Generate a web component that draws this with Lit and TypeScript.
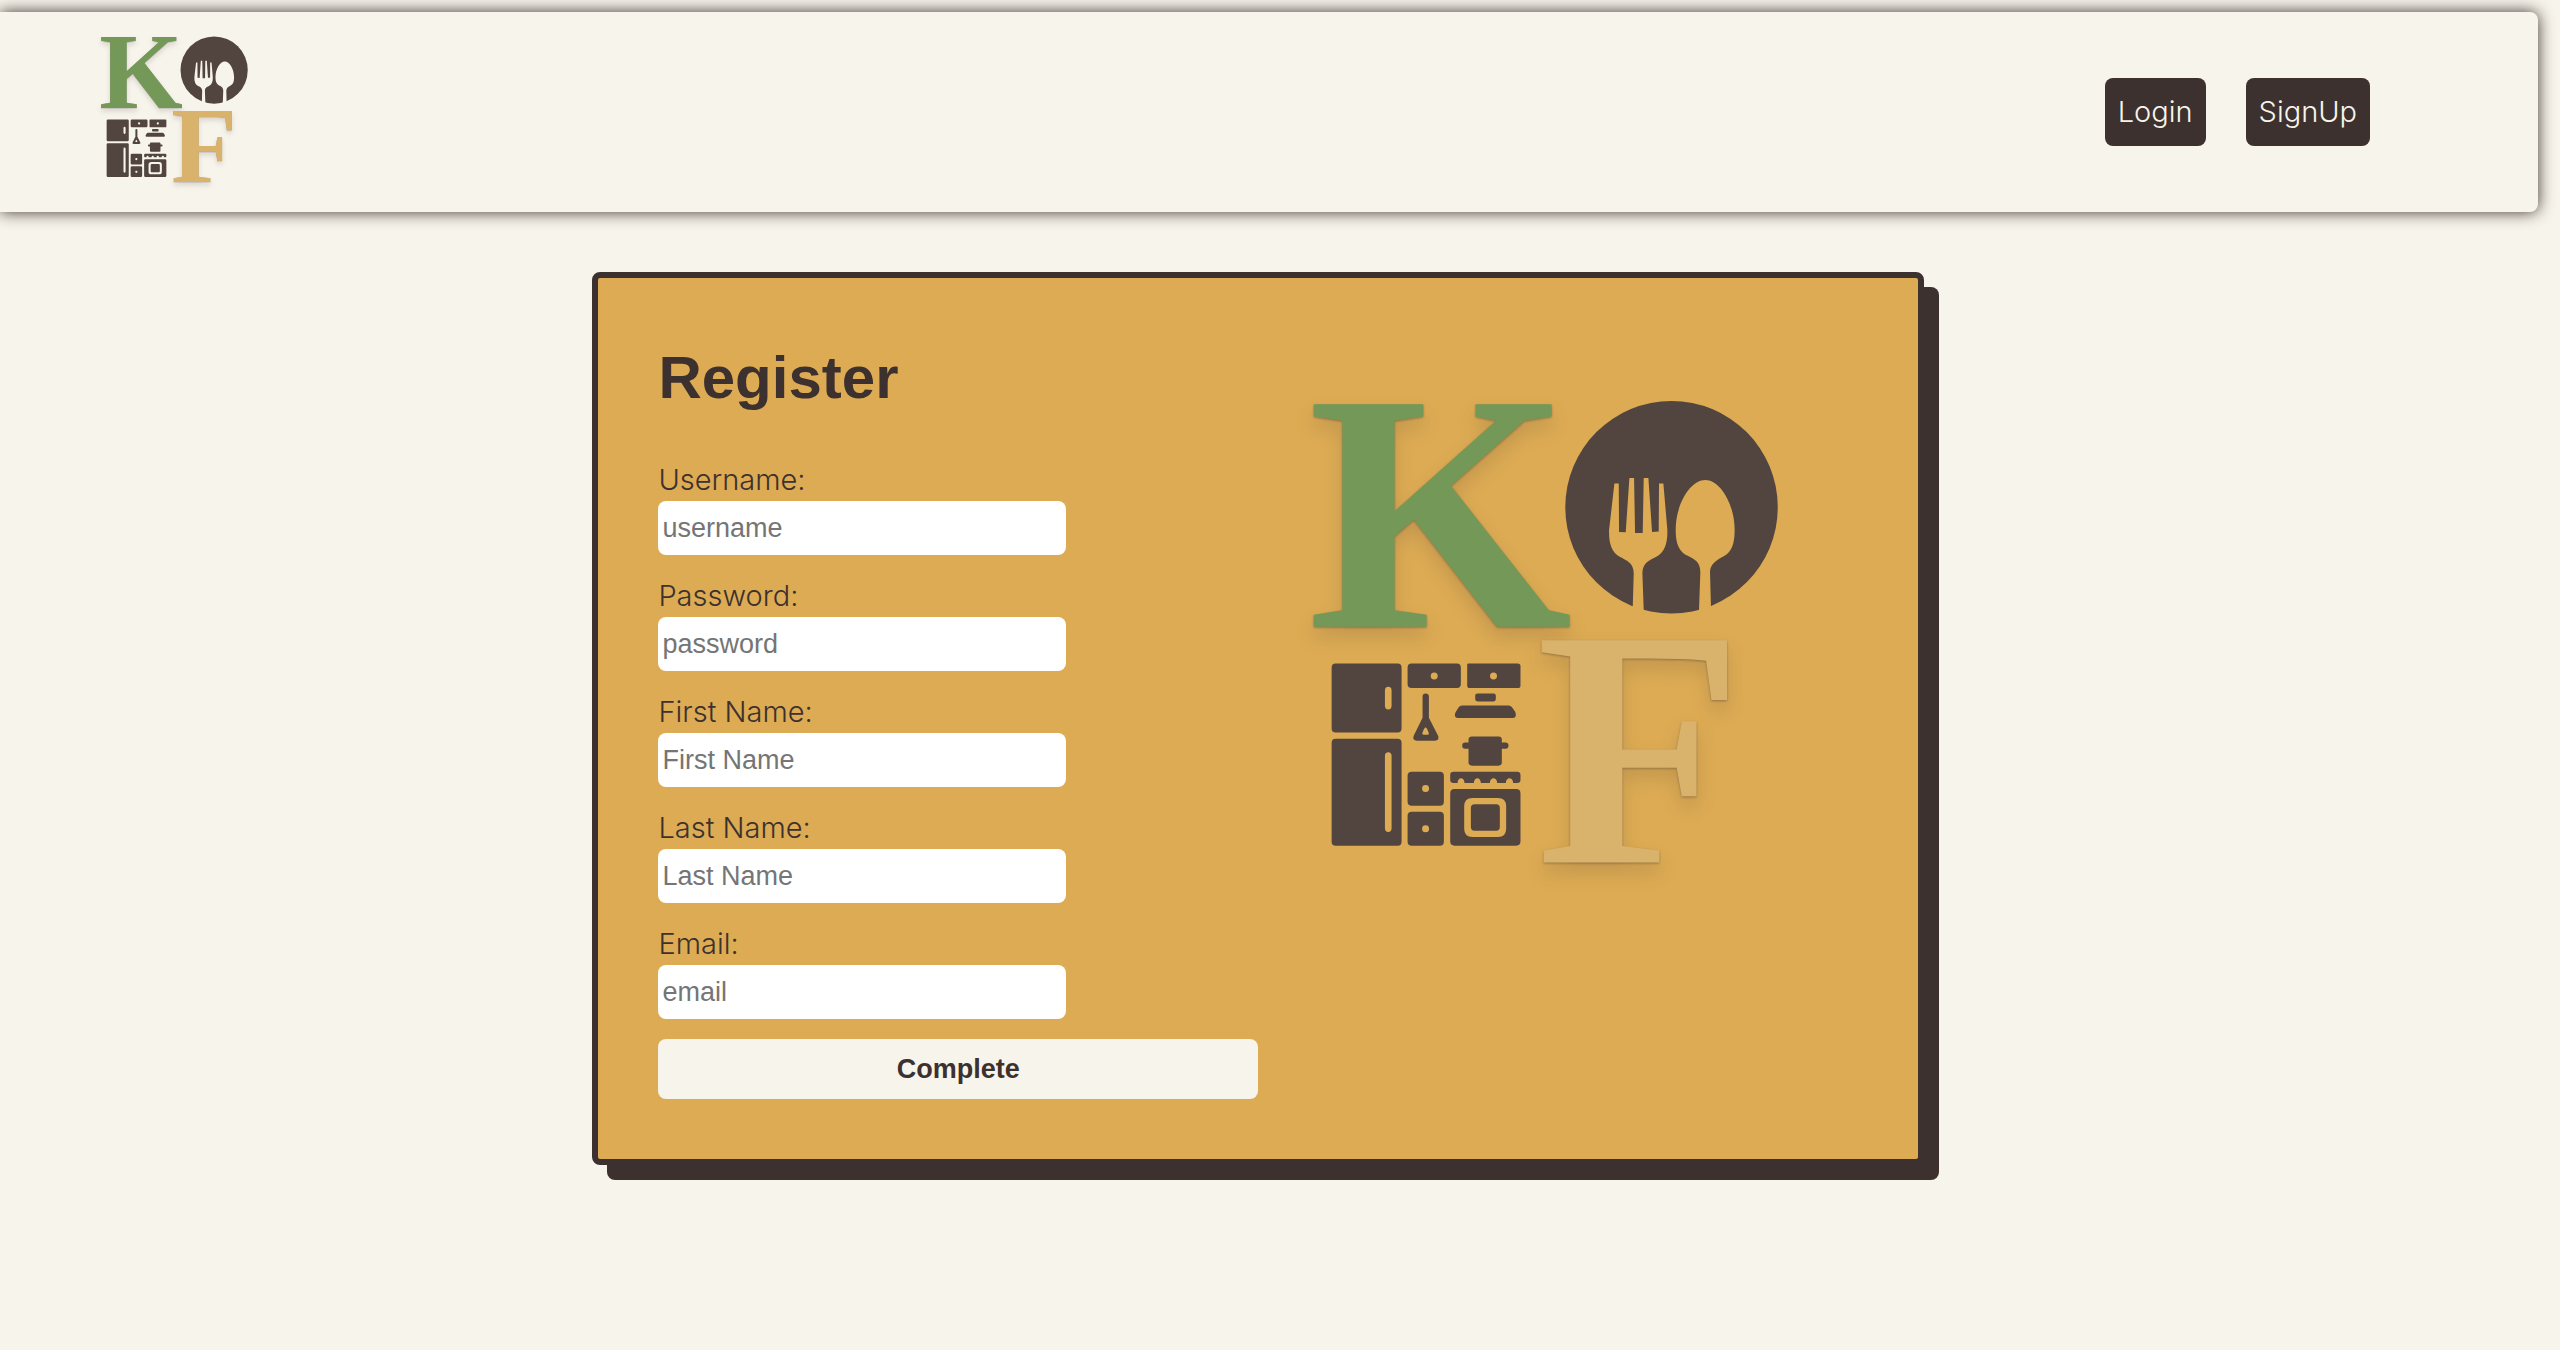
import { LitElement, html, css } from "lit";
import { customElement } from "lit/decorators.js";

interface Field {
  id: string;
  label: string;
  placeholder: string;
  type: string;
}

const FIELDS: Field[] = [
  { id: "username", label: "Username:", placeholder: "username", type: "text" },
  { id: "password", label: "Password:", placeholder: "password", type: "password" },
  { id: "first-name", label: "First Name:", placeholder: "First Name", type: "text" },
  { id: "last-name", label: "Last Name:", placeholder: "Last Name", type: "text" },
  { id: "email", label: "Email:", placeholder: "email", type: "email" },
];

@customElement("kof-logo")
export class KofLogo extends LitElement {
  static styles = css`
    :host {
      display: block;
    }
    .logo {
      display: block;
      width: 100%;
      height: auto;
      overflow: visible;
    }
    .letter {
      font-family: "Liberation Serif", "Times New Roman", serif;
      font-weight: 700;
      font-size: 340px;
      filter: drop-shadow(0 1px 1px rgba(60, 49, 47, 0.4)) drop-shadow(0 10px 9px rgba(60, 49, 47, 0.16));
    }
    .green {
      fill: #749858;
    }
    .sand {
      fill: #d9b36b;
    }
    .dark {
      fill: #524540;
    }
  `;

  render() {
    return html`
      <svg class="logo" viewBox="0 0 500 500" role="img" aria-label="KOF">
        <defs>
          <!-- Fork and spoon are cut out of the plate -->
          <mask id="cutlery" maskUnits="userSpaceOnUse" x="0" y="0" width="780" height="780">
            <rect width="780" height="780" fill="#fff" />
            <path
              fill="#000"
              d="M224 311H237L238 456L258 457L269 294H283L286 459H309L312 294H326L337 456L357 455L358 311H371L383 450C384 490 375 518 350 531C330 541 308 549 308 580L313 720H278L282 580C282 549 260 542 240 531C215 517 207 490 208 450Z"
            />
            <path
              fill="#000"
              d="M497 300C452 300 408 372 408 450C408 492 418 515 444 528C464 538 482 546 482 578L477 720H515L511 578C511 552 530 541 552 529C577 516 585 490 585 450C585 372 541 300 497 300Z"
            />
          </mask>
        </defs>

        <text class="letter green" x="10" y="237">K</text>
        <text class="letter sand" x="238" y="473">F</text>

        <g class="dark" transform="translate(242 -10) scale(0.33333)">
          <circle cx="395.500" cy="382" r="319" mask="url(#cutlery)" />
        </g>

        <g class="dark" transform="translate(12 250) scale(0.33333)">
          <!-- Fridge -->
          <path
            fill-rule="evenodd"
            d="M77 71H263Q275 71 275 83V266Q275 278 263 278H77Q65 278 65 266V83Q65 71 77 71ZM235 141Q225 141 225 152V198Q225 209 235 209Q245 209 245 198V152Q245 141 235 141Z"
          />
          <path
            fill-rule="evenodd"
            d="M77 297H263Q275 297 275 309V606Q275 618 263 618H77Q65 618 65 606V309Q65 297 77 297ZM235 338Q225 338 225 349V566Q225 577 235 577Q245 577 245 566V349Q245 338 235 338Z"
          />
          <!-- Wall cupboards -->
          <path
            fill-rule="evenodd"
            d="M305 71H441Q453 71 453 83V133Q453 145 441 145H305Q293 145 293 133V83Q293 71 305 71ZM373 98A10.500 10.500 0 1 0 373 119A10.500 10.500 0 1 0 373 98Z"
          />
          <path
            fill-rule="evenodd"
            d="M476 71H624Q632 71 632 79V137Q632 145 624 145H480Q472 145 472 137V75Q472 71 476 71ZM551 98A10.500 10.500 0 1 0 551 119A10.500 10.500 0 1 0 551 98Z"
          />
          <!-- Spatula -->
          <path
            fill-rule="evenodd"
            d="M347 161Q357 161 357 171V234L385 289Q389 303 375 303H321Q307 303 311 289L338 234V171Q338 161 347 161ZM347 263Q343 263 337 281Q338 285 342 285H353Q357 285 357 281Q351 263 347 263Z"
          />
          <!-- Cooker hood -->
          <rect x="496" y="161" width="62" height="24" rx="7" />
          <path d="M456 197H597Q602 197 606 202L616 216Q618 220 618 226Q618 235 609 235H444Q435 235 435 226Q435 220 438 216L447 202Q451 197 456 197Z" />
          <!-- Pot -->
          <rect x="476" y="290" width="100" height="88" rx="10" />
          <rect x="457" y="308" width="139" height="19" rx="9" />
          <!-- Drawers -->
          <path
            fill-rule="evenodd"
            d="M306 396H390Q402 396 402 408V486Q402 498 390 498H306Q293 498 293 486V408Q293 396 306 396ZM347 436A10.500 10.500 0 1 0 347 457A10.500 10.500 0 1 0 347 436Z"
          />
          <path
            fill-rule="evenodd"
            d="M306 516H390Q402 516 402 528V606Q402 618 390 618H306Q293 618 293 606V528Q293 516 306 516ZM347 557A10.500 10.500 0 1 0 347 578A10.500 10.500 0 1 0 347 557Z"
          />
          <!-- Stove -->
          <path
            d="M431 396H622Q632 396 632 406V420Q632 430 622 430H610C610 411 588 411 588 430H562C562 411 540 411 540 430H513C513 411 492 411 492 430H464C464 411 443 411 443 430H431Q421 430 421 420V406Q421 396 431 396Z"
          />
          <path
            fill-rule="evenodd"
            d="M434 448H619Q632 448 632 461V605Q632 618 619 618H434Q421 618 421 605V461Q421 448 434 448ZM488 475Q463 475 463 500V567Q463 592 488 592H564Q589 592 589 567V500Q589 475 564 475ZM494 494H559Q570 494 570 505V562Q570 573 559 573H494Q483 573 483 562V505Q483 494 494 494Z"
          />
        </g>
      </svg>
    `;
  }
}

@customElement("app-root")
export class AppRoot extends LitElement {
  static styles = css`
    :host {
      display: block;
      min-height: 100vh;
      padding-top: 12px;
      box-sizing: border-box;
      background: #f7f4eb;
      color: #3c312f;
      font-family: Inter, "Liberation Sans", Arial, sans-serif;
      font-weight: 300;
      font-size: 29px;
    }
    * {
      box-sizing: border-box;
    }
    .header {
      display: flex;
      align-items: center;
      justify-content: space-between;
      height: 200px;
      margin-right: 22px;
      padding: 0 168px 0 96px;
      border-radius: 0 8px 8px 0;
      box-shadow: 0 0 16px #3c312f;
    }
    .brand {
      display: block;
      width: 158px;
    }
    .nav {
      display: flex;
      gap: 40px;
    }
    .nav-link {
      padding: 0 13px;
      border-radius: 8px;
      background: #3c312f;
      color: #f7f4eb;
      line-height: 68px;
      text-decoration: none;
    }
    .main {
      padding: 60px 44px 60px 0;
    }
    .card {
      display: grid;
      grid-template-columns: 1fr 1fr;
      width: 52vw;
      margin: 0 auto;
      padding: 60px;
      border: 6px solid #3c312f;
      border-radius: 8px;
      background: #ddab53;
      box-shadow: 15px 15px 0 #3c312f;
    }
    .form {
      display: flex;
      flex-direction: column;
      gap: 20px;
    }
    .title {
      margin: 0 0 21px;
      font-family: "Liberation Sans", Arial, sans-serif;
      font-weight: 700;
      font-size: 60px;
      line-height: 80px;
    }
    .field {
      display: flex;
      flex-direction: column;
    }
    .label {
      line-height: 42px;
    }
    .input {
      width: 68%;
      height: 54px;
      padding: 0 4px;
      border: 0;
      border-radius: 8px;
      background: #fff;
      color: #3c312f;
      font: 400 27px "Liberation Sans", Arial, sans-serif;
    }
    .input::placeholder {
      color: #757575;
      opacity: 1;
    }
    .submit {
      height: 60px;
      padding: 0;
      border: 0;
      border-radius: 8px;
      background: #f7f4eb;
      color: #3c312f;
      font: 700 27px "Liberation Sans", Arial, sans-serif;
      cursor: pointer;
    }
    .art {
      padding: 52px 60px 0 40px;
    }
  `;

  render() {
    return html`
      <header class="header">
        <a class="brand" href="#home" aria-label="KOF home"><kof-logo></kof-logo></a>
        <nav class="nav">
          <a class="nav-link" href="#login">Login</a>
          <a class="nav-link" href="#signup">SignUp</a>
        </nav>
      </header>
      <main class="main">
        <section class="card">
          <form class="form" @submit=${(e: Event) => e.preventDefault()}>
            <h1 class="title">Register</h1>
            ${FIELDS.map(
              (f) => html`
                <div class="field">
                  <label class="label" for=${f.id}>${f.label}</label>
                  <input class="input" id=${f.id} name=${f.id} type=${f.type} placeholder=${f.placeholder} />
                </div>
              `
            )}
            <button class="submit" type="submit">Complete</button>
          </form>
          <div class="art"><kof-logo></kof-logo></div>
        </section>
      </main>
    `;
  }
}
